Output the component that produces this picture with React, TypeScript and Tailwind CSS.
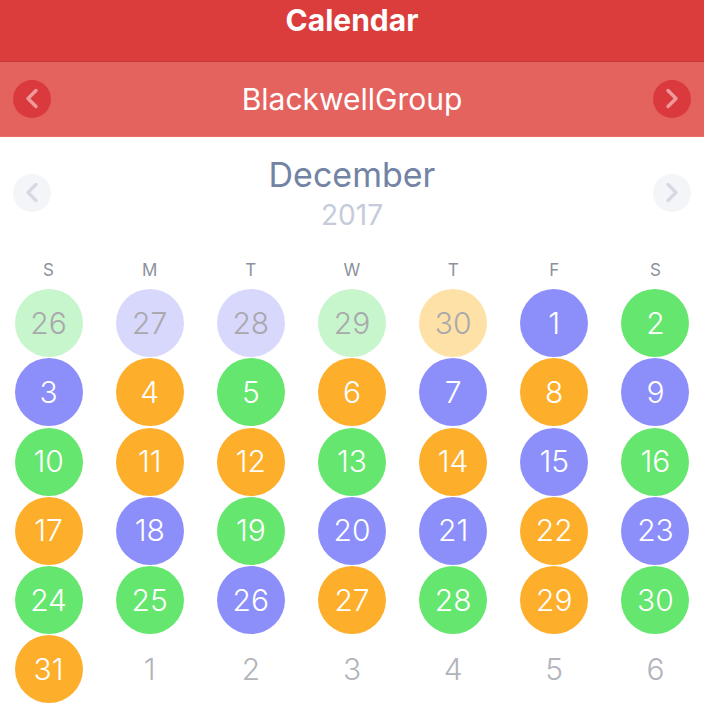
const font = { fontFamily: "Inter, 'Noto Sans', sans-serif" };

type Tone = "g" | "p" | "o" | "";

const solid: Record<string, string> = {
  g: "bg-[#65e66f] text-white",
  p: "bg-[#8c8ffa] text-white",
  o: "bg-[#fdae2b] text-white",
};

const faded: Record<string, string> = {
  g: "bg-[#c7f5cc] text-[#a9a9ad]",
  p: "bg-[#d8d8fc] text-[#a9a9ad]",
  o: "bg-[#fde1a6] text-[#a9a9ad]",
};

const prev: [number, Tone][] = [
  [26, "g"],
  [27, "p"],
  [28, "p"],
  [29, "g"],
  [30, "o"],
];

const dec: Tone[] = [
  "p", "g",
  "p", "o", "g", "o", "p", "o", "p",
  "g", "o", "o", "g", "o", "p", "g",
  "o", "p", "g", "p", "p", "o", "p",
  "g", "g", "p", "o", "g", "o", "g",
  "o",
];

const days = ["S", "M", "T", "W", "T", "F", "S"];

function Chevron({ dir, color }: { dir: "left" | "right"; color: string }) {
  const d = dir === "left" ? "M23 10.5 L15 18.5 L23 26.5" : "M15 10.5 L23 18.5 L15 26.5";
  return (
    <svg width="38" height="38" viewBox="0 0 38 38">
      <path d={d} fill="none" stroke={color} strokeWidth="3.4" strokeLinecap="round" strokeLinejoin="round" />
    </svg>
  );
}

export default function App() {
  const cells: { n: number; cls: string }[] = [
    ...prev.map(([n, t]) => ({ n, cls: faded[t] })),
    ...dec.map((t, i) => ({ n: i + 1, cls: solid[t] })),
    ...[1, 2, 3, 4, 5, 6].map((n) => ({ n, cls: "text-[#b1b4bb]" })),
  ];

  return (
    <div className="h-[704px] w-[704px] overflow-hidden bg-white" style={font}>
      <div className="flex h-[62px] items-start justify-center border-b border-[#c93636] bg-[#db3c3c] pt-[3px]">
        <span className="text-[30px] font-bold leading-[34px] text-white">Calendar</span>
      </div>

      <div className="flex h-[75px] items-center justify-between border-b border-[#ec6d68] bg-[#e5635e] px-[13px]">
        <div className="h-[38px] w-[38px] rounded-full bg-[#da3a3e]">
          <Chevron dir="left" color="#ef9a9a" />
        </div>
        <span className="text-[30px] leading-[36px] text-white">BlackwellGroup</span>
        <div className="h-[38px] w-[38px] rounded-full bg-[#da3a3e]">
          <Chevron dir="right" color="#ef9a9a" />
        </div>
      </div>

      <div className="flex items-center justify-between px-[13px] pt-[18px]">
        <div className="h-[38px] w-[38px] rounded-full bg-[#f3f5f9]">
          <Chevron dir="left" color="#d5d9e3" />
        </div>
        <div className="flex flex-col items-center">
          <span className="text-[34px] leading-[40px] text-[#7383a3]">December</span>
          <span className="mt-[4px] text-[28px] leading-[32px] text-[#c5cbdb]">2017</span>
        </div>
        <div className="h-[38px] w-[38px] rounded-full bg-[#f3f5f9]">
          <Chevron dir="right" color="#d5d9e3" />
        </div>
      </div>

      <div className="-ml-[2px] mt-[29px] w-[708px]">
        <div className="grid grid-cols-7">
          {days.map((d, i) => (
            <span key={i} className="text-center text-[17px] leading-[20px] text-[#8b929d]">
              {d}
            </span>
          ))}
        </div>
        <div className="mt-[9px] grid grid-cols-7 auto-rows-[69.3px]">
          {cells.map((c, i) => (
            <div key={i} className="flex items-start justify-center">
              <div
                className={`flex h-[68px] w-[68px] items-center justify-center rounded-full text-[30px] font-light ${c.cls}`}
              >
                {c.n}
              </div>
            </div>
          ))}
        </div>
      </div>
    </div>
  );
}
